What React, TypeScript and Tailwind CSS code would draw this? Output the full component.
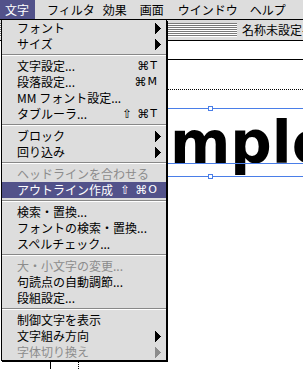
type Entry = {
  label: string;
  shift?: boolean;
  key?: string;
  sub?: boolean;
  disabled?: boolean;
  active?: boolean;
};

const groups: Entry[][] = [
  [
    { label: 'フォント', sub: true },
    { label: 'サイズ', sub: true },
  ],
  [
    { label: '文字設定...', key: 'T' },
    { label: '段落設定...', key: 'M' },
    { label: 'MM フォント設定...' },
    { label: 'タブルーラ...', shift: true, key: 'T' },
  ],
  [
    { label: 'ブロック', sub: true },
    { label: '回り込み', sub: true },
  ],
  [
    { label: 'ヘッドラインを合わせる', disabled: true },
    { label: 'アウトライン作成', shift: true, key: 'O', active: true },
  ],
  [
    { label: '検索・置換...' },
    { label: 'フォントの検索・置換...' },
    { label: 'スペルチェック...' },
  ],
  [
    { label: '大・小文字の変更...', disabled: true },
    { label: '句読点の自動調節...' },
    { label: '段組設定...' },
  ],
  [
    { label: '制御文字を表示' },
    { label: '文字組み方向', sub: true },
    { label: '字体切り換え', sub: true, disabled: true },
  ],
];

const MenuBar = () => (
  <div className="flex h-[20px] items-stretch bg-[#dddddd] border-b border-black whitespace-nowrap">
    <span className="shrink-0 flex items-center pl-[5px] pr-[6px] bg-[#52528a] text-white">文字</span>
    <span className="shrink-0 flex items-center pl-[12px]">フィルタ</span>
    <span className="shrink-0 flex items-center pl-[8px]">効果</span>
    <span className="shrink-0 flex items-center pl-[13px]">画面</span>
    <span className="shrink-0 flex items-center pl-[14px]">ウインドウ</span>
    <span className="shrink-0 flex items-center pl-[12px]">ヘルプ</span>
  </div>
);

const stripes =
  'bg-[repeating-linear-gradient(to_bottom,#7a7a7a_0px,#7a7a7a_1px,#ffffff_1px,#ffffff_2px)]';

const DocWindow = () => (
  <div className="flex flex-col h-[349px]">
    <div className="flex h-[21px] bg-[#dddddd] border-b border-black">
      <div className={`w-[237px] shrink-0 my-[3px] ${stripes}`} />
      <div className="shrink-0 pl-[5px] pr-[4px] flex items-center whitespace-nowrap">名称未設定-1</div>
      <div className={`flex-1 my-[3px] ${stripes}`} />
    </div>
    <div className="relative flex-1 bg-white">
      {/* page edge and margin */}
      <div className="absolute left-[50px] top-[18px] -right-[10px] -bottom-[10px] border-l border-t border-black" />
      <div className="absolute left-[78px] top-[48px] -right-[10px] -bottom-[10px] border-l border-t border-dotted border-black" />

      <div className="absolute left-[89px] top-[73px] whitespace-nowrap leading-none text-[58px] font-bold font-['DejaVu_Sans',sans-serif]">
        Sample
      </div>

      {/* text box guides */}
      <div className="absolute left-[110px] -right-[10px] top-[67px] h-[69px] border-y border-[#4a7ee8]" />
      <div className="absolute left-[110px] right-0 top-[122px] h-px bg-[#4a7ee8]" />
      <div className="absolute left-[208px] top-[65px] w-[5px] h-[5px] border border-[#4a7ee8] bg-white" />
      <div className="absolute left-[208px] top-[133px] w-[5px] h-[5px] border border-[#4a7ee8] bg-white" />
    </div>
  </div>
);

const Arrow = ({ color }: { color: string }) => (
  <svg width="6" height="11" viewBox="0 0 6 11" shapeRendering="crispEdges">
    <path d="M0 0 L6 5.5 L0 11 Z" fill={color} />
  </svg>
);

const Row = ({ item }: { item: Entry }) => {
  const color = item.active ? 'text-white' : item.disabled ? 'text-[#8c8c8c]' : 'text-black';
  return (
    <div
      className={`h-[16px] flex items-center pl-[15px] pr-[5px] whitespace-nowrap ${color} ${
        item.active ? 'bg-[#52528a]' : ''
      }`}
    >
      <span className="flex-1">{item.label}</span>
      {item.key && (
        <span className="mr-[4px] flex items-center font-['DejaVu_Sans',sans-serif]">
          {item.shift && <span className="mr-[5px] text-[12px]">⇧</span>}
          <span className="text-[12px] mr-px">⌘</span>
          <span className="text-[11px]">{item.key}</span>
        </span>
      )}
      {item.sub && <Arrow color={item.disabled ? '#8c8c8c' : '#000'} />}
    </div>
  );
};

const TypeMenu = () => (
  <div className="absolute left-[1px] top-[20px] w-[166px] bg-[#dddddd] border-x border-b border-black shadow-[1px_1px_0_#000]">
    {groups.map((group, gi) => (
      <div key={gi}>
        {gi > 0 && (
          <div className="h-[6px] flex flex-col justify-center">
            <div className="h-px bg-[#888888]" />
            <div className="h-px bg-white" />
          </div>
        )}
        {group.map((item) => (
          <Row key={item.label} item={item} />
        ))}
      </div>
    ))}
  </div>
);

export default function App() {
  return (
    <div className="relative w-[303px] h-[369px] overflow-hidden bg-white text-[12px] text-black font-['Noto_Sans_CJK_JP',sans-serif]">
      <MenuBar />
      <DocWindow />
      <TypeMenu />
    </div>
  );
}
